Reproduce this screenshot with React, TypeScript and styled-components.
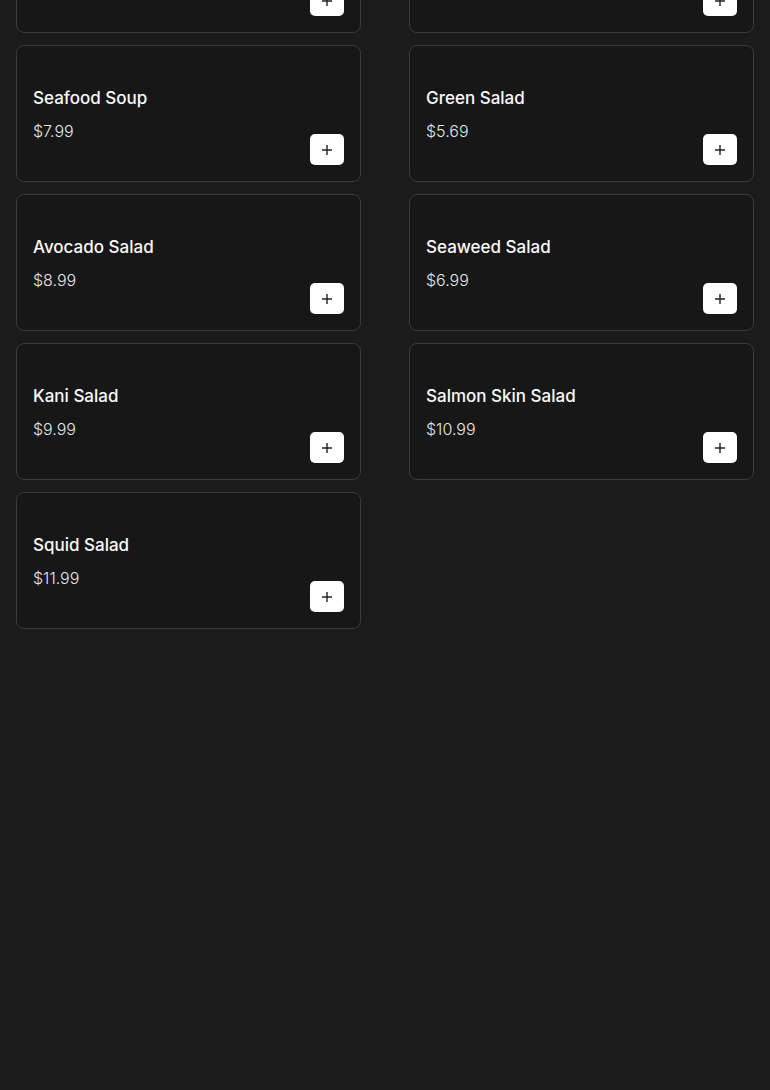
import styled, { createGlobalStyle } from 'styled-components';

interface Dish {
  name: string;
  price: string;
}

const dishes: Dish[] = [
  { name: 'Miso Soup', price: '$3.99' },
  { name: 'Clear Soup', price: '$3.99' },
  { name: 'Seafood Soup', price: '$7.99' },
  { name: 'Green Salad', price: '$5.69' },
  { name: 'Avocado Salad', price: '$8.99' },
  { name: 'Seaweed Salad', price: '$6.99' },
  { name: 'Kani Salad', price: '$9.99' },
  { name: 'Salmon Skin Salad', price: '$10.99' },
  { name: 'Squid Salad', price: '$11.99' },
];

const GlobalStyle = createGlobalStyle`
  html, body {
    margin: 0;
    padding: 0;
    background: #1b1b1b;
    height: 100%;
    overflow: hidden;
  }
  body {
    font-family: Inter, "Noto Sans", "Liberation Sans", sans-serif;
    color: #fff;
  }
`;

const Page = styled.div`
  min-height: 1090px;
  background: #1b1b1b;
  padding: 0 16px;
  box-sizing: border-box;
`;

// list is scrolled: first row sits mostly above the viewport
const Grid = styled.div`
  display: grid;
  grid-template-columns: 1fr 1fr;
  column-gap: 48px;
  row-gap: 12px;
  margin-top: -104px;
`;

const Card = styled.div`
  height: 137px;
  box-sizing: border-box;
  background: #171717;
  border: 1px solid #3b3b3b;
  border-radius: 8px;
  padding: 16px;
  display: flex;
  justify-content: space-between;
  align-items: flex-end;
`;

const Info = styled.div`
  display: flex;
  flex-direction: column;
  gap: 12px;
  margin-bottom: 24px;
`;

const Name = styled.div`
  font-size: 17px;
  font-weight: 500;
  line-height: 22px;
  color: #fafafa;
`;

const Price = styled.div`
  font-size: 16px;
  font-weight: 300;
  line-height: 20px;
  color: #e6e6e6;
`;

const AddButton = styled.button`
  width: 34px;
  height: 31px;
  border: none;
  border-radius: 5px;
  background: #fff;
  display: flex;
  align-items: center;
  justify-content: center;
  padding: 0;
  cursor: pointer;
`;

const PlusIcon = () => (
  <svg width="12" height="12" viewBox="0 0 12 12" fill="none">
    <path d="M6 1v10M1 6h10" stroke="#222" strokeWidth="1.4" />
  </svg>
);

const App = () => {
  return (
    <Page>
      <GlobalStyle />
      <Grid>
        {dishes.map((d) => (
          <Card key={d.name}>
            <Info>
              <Name>{d.name}</Name>
              <Price>{d.price}</Price>
            </Info>
            <AddButton aria-label={`Add ${d.name}`}>
              <PlusIcon />
            </AddButton>
          </Card>
        ))}
      </Grid>
    </Page>
  );
};

export default App;
